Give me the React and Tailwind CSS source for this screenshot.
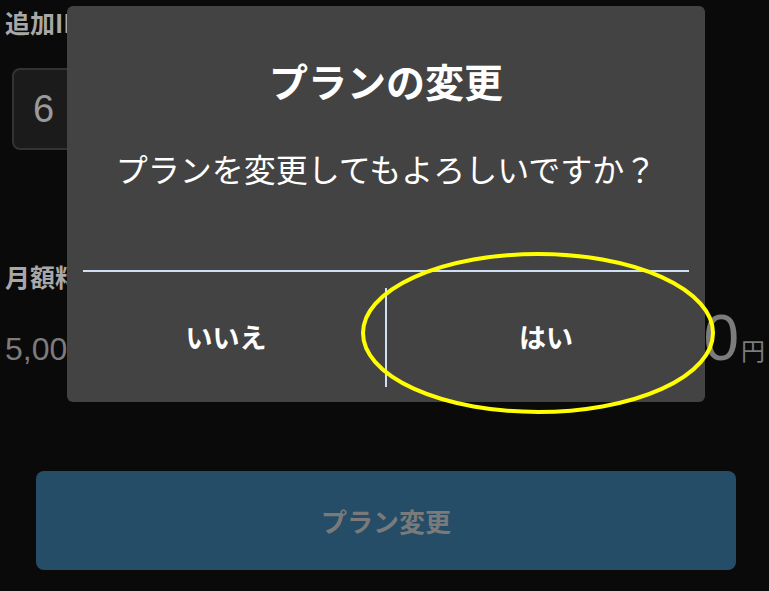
import React from 'react';

const jp = { fontFamily: '"Noto Sans CJK JP", "Noto Sans", sans-serif' };
const num = { fontFamily: '"Liberation Sans", "Noto Sans CJK JP", sans-serif' };

const ConfirmDialog = () => (
  <div
    className="absolute left-[67px] top-[6px] w-[638px] h-[396px] rounded-[6px] bg-[#434343] flex flex-col"
    style={jp}
  >
    <h2 className="pt-[52px] text-center text-[39px] leading-[44px] font-bold text-white">
      プランの変更
    </h2>
    <p className="mt-[46px] text-center text-[32px] leading-[40px] text-white">
      プランを変更してもよろしいですか？
    </p>
    <div className="mt-[82px] mx-[16px] h-[2px] bg-[#cfe0f5]" />
    <div className="flex flex-1 items-center">
      <button className="flex-1 h-full text-[27px] font-bold text-white">いいえ</button>
      <div className="w-[2px] h-[99px] bg-[#cfe0f5]" />
      <button className="flex-1 h-full text-[27px] font-bold text-white">はい</button>
    </div>
  </div>
);

export default function App() {
  return (
    <div className="relative w-[769px] h-[591px] overflow-hidden bg-[#0a0a0a]">
      {/* page behind the dialog */}
      <div className="flex flex-col">
        <div className="pt-[4px] pl-[5px] text-[25px] leading-[36px] font-bold text-[#a8a8a8]" style={jp}>
          追加ID数
        </div>
        <div className="mt-[28px] ml-[12px] w-[200px] h-[82px] rounded-[8px] border-2 border-[#333333] bg-[#1b1b1b] flex items-center pl-[19px]">
          <span className="text-[38px] text-[#9a9a9a]" style={num}>6</span>
        </div>
        <div className="mt-[108px] pl-[5px] text-[25px] leading-[36px] font-bold text-[#a8a8a8]" style={jp}>
          月額料金
        </div>
        <div className="mt-[12px] flex items-baseline justify-between pl-[5px] pr-[4px]">
          <span className="text-[32px] leading-none text-[#7c7c7c]" style={num}>5,000円</span>
          <span className="flex items-baseline text-[#7c7c7c]">
            <span className="text-[64px] leading-none font-light" style={num}>6,000</span>
            <span className="ml-[2px] text-[24px] leading-none" style={jp}>円</span>
          </span>
        </div>
        <div className="mt-[101px] ml-[36px] w-[700px] h-[99px] rounded-[8px] bg-[#254d67] flex items-center justify-center">
          <span className="text-[26px] font-bold text-[#7a7a7a]" style={jp}>プラン変更</span>
        </div>
      </div>

      <ConfirmDialog />

      {/* highlight annotation */}
      <svg className="absolute left-[359px] top-[250px]" width="358" height="166" viewBox="0 0 358 166">
        <ellipse cx="179" cy="83" rx="175" ry="79" fill="none" stroke="#ffff00" strokeWidth="4" />
      </svg>
    </div>
  );
}
